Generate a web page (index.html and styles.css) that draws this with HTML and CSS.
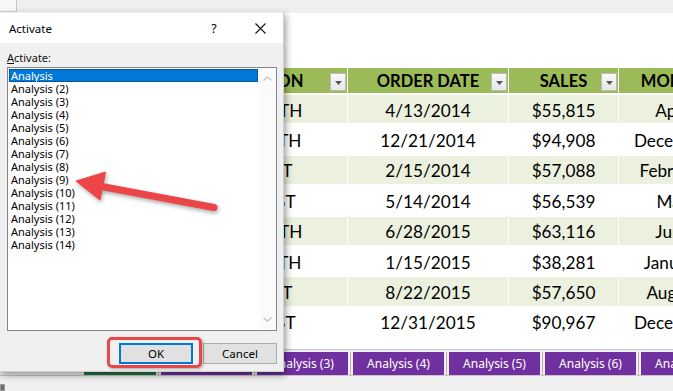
FILE: index.html
```html
<!DOCTYPE html>
<html>
<head>
<meta charset="utf-8">
<link rel="stylesheet" href="styles.css">
</head>
<body>
<div class="screen">
  <div class="sheet">
    <div class="topbar"><div class="namebox"></div></div>
    <div class="grid">
      <div class="table">
        <div class="th"><span></span><span class="tht">REGION</span><span class="filter"><svg width="7" height="4" viewBox="0 0 7 4"><path d="M0 0H7L3.5 4Z" fill="#555"/></svg></span></div>
        <div class="th"><span></span><span class="tht">ORDER DATE</span><span class="filter"><svg width="7" height="4" viewBox="0 0 7 4"><path d="M0 0H7L3.5 4Z" fill="#555"/></svg></span></div>
        <div class="th"><span></span><span class="tht">SALES</span><span class="filter"><svg width="7" height="4" viewBox="0 0 7 4"><path d="M0 0H7L3.5 4Z" fill="#555"/></svg></span></div>
        <div class="th"><span></span><span class="tht">MONTH</span><span class="filter"><svg width="7" height="4" viewBox="0 0 7 4"><path d="M0 0H7L3.5 4Z" fill="#555"/></svg></span></div>

        <div class="td band">NORTH</div><div class="td band">4/13/2014</div><div class="td band">$55,815</div><div class="td band">April</div>
        <div class="td">SOUTH</div><div class="td">12/21/2014</div><div class="td">$94,908</div><div class="td">December</div>
        <div class="td band">EAST</div><div class="td band">2/15/2014</div><div class="td band">$57,088</div><div class="td band">February</div>
        <div class="td">WEST</div><div class="td">5/14/2014</div><div class="td">$56,539</div><div class="td">May</div>
        <div class="td band">NORTH</div><div class="td band">6/28/2015</div><div class="td band">$63,116</div><div class="td band">June</div>
        <div class="td">SOUTH</div><div class="td">1/15/2015</div><div class="td">$38,281</div><div class="td">January</div>
        <div class="td band">EAST</div><div class="td band">8/22/2015</div><div class="td band">$57,650</div><div class="td band">August</div>
        <div class="td">WEST</div><div class="td">12/31/2015</div><div class="td">$90,967</div><div class="td">December</div>
      </div>
    </div>
    <div class="tabbar">
      <div class="tab active">Analysis</div>
      <span class="sep"></span>
      <div class="tab">Analysis (2)</div>
      <span class="sep"></span>
      <div class="tab">Analysis (3)</div>
      <span class="sep"></span>
      <div class="tab">Analysis (4)</div>
      <span class="sep"></span>
      <div class="tab">Analysis (5)</div>
      <span class="sep"></span>
      <div class="tab">Analysis (6)</div>
      <span class="sep"></span>
      <div class="tab">Analysis (7)</div>
    </div>
    <div class="status"><span class="sicon"></span></div>
  </div>

  <div class="dialog">
    <div class="titlebar">
      <span class="title">Activate</span>
      <span class="tbtn help">?</span>
      <span class="tbtn close"><svg width="11" height="11" viewBox="0 0 11 11"><path d="M0.5 0.5L10.5 10.5M10.5 0.5L0.5 10.5" stroke="#111" stroke-width="1.1" fill="none"/></svg></span>
    </div>
    <div class="dbody">
      <div class="label"><u>A</u>ctivate:</div>
      <div class="listbox">
        <div class="items">
          <div class="item sel">Analysis</div>
          <div class="item">Analysis (2)</div>
          <div class="item">Analysis (3)</div>
          <div class="item">Analysis (4)</div>
          <div class="item">Analysis (5)</div>
          <div class="item">Analysis (6)</div>
          <div class="item">Analysis (7)</div>
          <div class="item">Analysis (8)</div>
          <div class="item">Analysis (9)</div>
          <div class="item">Analysis (10)</div>
          <div class="item">Analysis (11)</div>
          <div class="item">Analysis (12)</div>
          <div class="item">Analysis (13)</div>
          <div class="item">Analysis (14)</div>
        </div>
        <div class="vscroll">
          <span class="sarrow"><svg width="9" height="5" viewBox="0 0 9 5"><path d="M0.5 4.5L4.5 0.8L8.5 4.5" stroke="#c2c2c2" stroke-width="1.2" fill="none"/></svg></span>
          <span class="sarrow"><svg width="9" height="5" viewBox="0 0 9 5"><path d="M0.5 0.5L4.5 4.2L8.5 0.5" stroke="#c2c2c2" stroke-width="1.2" fill="none"/></svg></span>
        </div>
      </div>
      <div class="buttons">
        <div class="btn default">OK</div>
        <div class="btn">Cancel</div>
      </div>
    </div>
  </div>

  <div class="okmark"></div>

  <svg class="arrow" width="673" height="391" viewBox="0 0 673 391">
    <g fill="#ec4548" stroke="#ec4548">
      <line x1="99" y1="186" x2="214" y2="207.5" stroke-width="7" stroke-linecap="round"/>
      <path d="M76 181L105.5 172L100 200Z" stroke-width="1" stroke-linejoin="round"/>
    </g>
  </svg>
</div>
</body>
</html>
```
FILE: styles.css
```css
* { box-sizing: border-box; }
html, body { margin: 0; padding: 0; }
body { width: 673px; height: 391px; overflow: hidden; background: #fff; }

.screen { position: relative; width: 673px; height: 391px; overflow: hidden; }

.sheet { display: flex; flex-direction: column; height: 391px; }
.topbar { height: 13px; background: #efefef; display: flex; }
.namebox { width: 17px; height: 12px; border-right: 1px solid #c8c8c8; border-bottom: 1px solid #d4d4d4; background: #f7f7f7; }

.grid { flex: 1; background: #fff; padding: 55px 0 0 197px; overflow: hidden; }
.table {
  display: grid;
  grid-template-columns: 150px 160px 109px 108px;
  grid-template-rows: 25px repeat(8, 28.4px);
  column-gap: 1px;
  row-gap: 2px;
  width: 530px;
  font-family: Lato, "Liberation Sans", sans-serif;
  color: #000;
}
.th {
  background: #9bbb59;
  display: grid;
  grid-template-columns: 1fr auto 1fr;
  align-items: center;
  font-weight: bold;
  font-size: 16.5px;
  white-space: nowrap;
}
.tht { text-align: center; }
.filter {
  justify-self: end;
  align-self: start;
  margin-top: 5px;
  margin-right: 1px;
  width: 16px;
  height: 18px;
  border: 1px solid #bcbcbc;
  background: linear-gradient(#fafafa, #e6e6e6);
  display: flex;
  align-items: center;
  justify-content: center;
  padding-top: 2px;
}
.filter svg { display: block; }
.td {
  display: flex;
  align-items: center;
  justify-content: center;
  font-size: 17.2px;
  white-space: nowrap;
  background: #fff;
  padding-top: 2px;
}
.td.band { background: #ebf1de; }

.tabbar {
  height: 27px;
  border-top: 1px solid #c6c6c6;
  border-bottom: 1px solid #c6c6c6;
  background: #f0f0f0;
  padding: 2px 0 0 84px;
  display: flex;
  align-items: stretch;
  white-space: nowrap;
}
.tab {
  width: 91px;
  flex: none;
  background: #7030a0;
  color: #fff;
  font-family: "Noto Sans", "Open Sans", sans-serif;
  font-size: 12px;
  display: flex;
  align-items: center;
  justify-content: center;
}
.tab.active { width: 72px; background: #fff; color: #1e7145; border-bottom: 3px solid #217346; }
.sep {
  width: 5px;
  flex: none;
  background: linear-gradient(90deg, transparent 2px, #b4b4b4 2px, #b4b4b4 3px, transparent 3px);
}
.status { height: 15px; background: #f0f0f0; display: flex; align-items: flex-end; }
.sicon { width: 5px; height: 7px; background: #6d6d6d; border: 1px solid #9a9a9a; }

.dialog {
  position: absolute;
  left: -1px;
  top: 12px;
  width: 285px;
  height: 360px;
  border: 1px solid #cfcfcf;
  border-top-color: #efefef;
  background: #f0f0f0;
  box-shadow: 2px 3px 7px rgba(0, 0, 0, 0.38);
  display: flex;
  flex-direction: column;
  font-family: "Noto Sans", "Open Sans", sans-serif;
  color: #000;
}
.titlebar {
  height: 30px;
  background: #fff;
  display: flex;
  align-items: center;
  padding-left: 9px;
}
.title { font-size: 11.5px; flex: 1; }
.tbtn { width: 46px; height: 30px; display: flex; align-items: center; justify-content: center; }
.help { font-size: 12.5px; }
.close svg { display: block; }

.dbody { padding: 8px 6px 7px 7px; display: flex; flex-direction: column; }
.label { font-size: 11px; line-height: 14px; height: 14px; color: #111; }
.listbox {
  margin-top: 2px;
  height: 264px;
  border: 1px solid #828790;
  background: #fff;
  display: flex;
}
.items { flex: 1; padding: 1px; }
.item {
  height: 13px;
  line-height: 13px;
  font-size: 11px;
  padding-left: 2px;
  white-space: nowrap;
}
.item.sel { background: #0078d7; color: #fff; outline: 1px dotted rgba(0, 0, 0, 0.55); outline-offset: -1px; }
.vscroll {
  width: 17px;
  background: #fbfbfb;
  display: flex;
  flex-direction: column;
  justify-content: space-between;
  padding: 8px 0 8px;
}
.sarrow { height: 5px; display: flex; justify-content: center; }
.sarrow svg { display: block; }

.buttons { margin-top: 12px; display: flex; justify-content: flex-end; gap: 10px; }
.btn {
  width: 74px;
  height: 21px;
  border: 1px solid #adadad;
  background: #e1e1e1;
  font-size: 11.5px;
  display: flex;
  align-items: center;
  justify-content: center;
}
.btn.default { border: 2px solid #0078d7; }

.okmark {
  position: absolute;
  left: 107px;
  top: 337px;
  width: 95px;
  height: 31px;
  border: 3px solid #e5474b;
  border-radius: 5px;
  box-shadow: 1px 1px 3px rgba(0, 0, 0, 0.3);
}
.arrow {
  position: absolute;
  left: 0;
  top: 0;
  filter: drop-shadow(1px 2px 2px rgba(0, 0, 0, 0.35));
}
```
